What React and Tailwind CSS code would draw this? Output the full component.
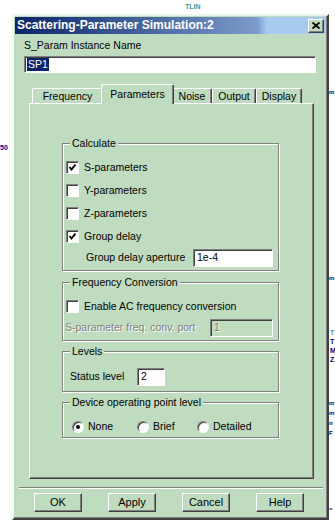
import React from 'react';

const raised = 'border border-t-white border-l-white border-r-[#404040] border-b-[#404040] shadow-[inset_-1px_-1px_0_#808080]';
const sunken = 'border border-t-[#808080] border-l-[#808080] border-r-white border-b-white shadow-[inset_1px_1px_0_#404040]';
const etched = 'border border-[#808080] shadow-[inset_1px_1px_0_#fff,1px_1px_0_#fff]';

function CheckBox({ checked }) {
  return (
    <div className={`w-[13px] h-[13px] bg-white flex items-center justify-center shrink-0 ${sunken}`}>
      {checked && (
        <svg width="9" height="9" viewBox="0 0 9 9">
          <polyline points="1.5,4 3.5,6.5 7.5,1.5" fill="none" stroke="#000" strokeWidth="2" />
        </svg>
      )}
    </div>
  );
}

function Radio({ checked }) {
  return (
    <div className="w-[12px] h-[12px] rounded-full bg-white border border-t-[#808080] border-l-[#808080] border-r-white border-b-white shadow-[inset_1px_1px_0_#404040] flex items-center justify-center shrink-0">
      {checked && <div className="w-[4px] h-[4px] rounded-full bg-black" />}
    </div>
  );
}

function Group({ title, className = '', children }) {
  return (
    <fieldset className={`ml-[32px] w-[217px] p-0 ${etched} ${className}`}>
      <legend className="ml-[7px] px-[2px] h-[13px] leading-[13px] bg-[#c0dcc0]">{title}</legend>
      {children}
    </fieldset>
  );
}

const tabs = [
  { name: 'Frequency', w: 'w-[71px]' },
  { name: 'Parameters', w: 'w-[73px]', active: true },
  { name: 'Noise', w: 'w-[40px]' },
  { name: 'Output', w: 'w-[44px]' },
  { name: 'Display', w: 'w-[46px]' },
];

export default function App() {
  return (
    <div className="relative w-[335px] h-[531px] bg-white overflow-hidden font-['Liberation_Sans',Arial,sans-serif] text-[10.5px] text-black">
      {/* schematic behind the dialog */}
      <span className="absolute left-[185px] top-[2px] text-[7px] font-bold text-[#3a9a9a]">TLIN</span>
      <span className="absolute left-[0px] top-[143px] text-[7px] font-bold text-[#000090]">50</span>
      <span className="absolute left-[329px] top-[88px] text-[6px] font-bold text-[#000090]">m</span>
      <span className="absolute left-[329px] top-[274px] text-[6px] font-bold text-[#000090]">m</span>
      <div className="absolute left-[330px] top-[328px] text-[7px] leading-[9px] font-bold">
        <div className="text-[#3a9a9a]">T</div>
        <div className="text-[#000090]">T</div>
        <div className="text-[#000090]">M</div>
        <div className="text-[#000090]">Z</div>
      </div>
      <div className="absolute left-[329px] top-[398px] text-[6px] leading-[10px] font-bold text-[#000090]">
        <div>m</div>
        <div>m</div>
        <div>n</div>
        <div>F</div>
      </div>
      <span className="absolute left-[329px] top-[505px] text-[6px] font-bold text-[#000090]">=</span>

      {/* dialog */}
      <div className="relative mt-[14px] ml-[12px] w-[317px] h-[506px] p-[1px] bg-[#c0dcc0] border-2 border-t-[#e8f4e8] border-l-[#f4faf4] border-r-[#404040] border-b-[#404040] shadow-[inset_-1px_-1px_0_#808080]">
        {/* title bar */}
        <div className="h-[17px] flex items-center justify-between bg-[linear-gradient(to_right,#0a246a_0%,#7d9ccb_78%,#a6caf0_81%,#a6caf0_100%)] pl-[2px] pr-[2px]">
          <span className="text-white font-bold text-[12px] leading-[17px]">Scattering-Parameter Simulation:2</span>
          <div className={`w-[16px] h-[14px] bg-[#c0dcc0] flex items-center justify-center ${raised}`}>
            <svg width="8" height="7" viewBox="0 0 8 7">
              <path d="M0.5 0.5 L7.5 6.5 M7.5 0.5 L0.5 6.5" stroke="#000" strokeWidth="1.8" />
            </svg>
          </div>
        </div>

        <div className="pl-[9px]">
          <div className="mt-[5px] h-[13px] leading-[13px]">S_Param Instance Name</div>
          <div className={`mt-[4px] w-[292px] h-[17px] bg-white flex items-center pl-[2px] ${sunken}`}>
            <span className="bg-[#0a246a] text-white px-[1px] leading-[13px]">SP1</span>
          </div>

          {/* tabs */}
          <div className="ml-[5px] mt-[11px]">
            <div className="h-[19px] flex items-end pl-[3px]">
              {tabs.map(t =>
                t.active ? (
                  <div
                    key={t.name}
                    className={`relative z-10 -mx-[2px] -mb-px h-[20px] ${t.w} bg-[#c0dcc0] border-t border-l border-t-white border-l-white border-r border-r-[#404040] shadow-[inset_-1px_0_0_#808080] rounded-t-[2px] flex justify-center pt-[3px] leading-[13px]`}
                  >
                    {t.name}
                  </div>
                ) : (
                  <div
                    key={t.name}
                    className={`h-[15px] ${t.w} border-t border-l border-t-white border-l-white border-r border-r-[#404040] shadow-[inset_-1px_0_0_#808080] rounded-t-[2px] flex justify-center pt-[1px] leading-[13px]`}
                  >
                    {t.name}
                  </div>
                )
              )}
            </div>

            <div className="w-[285px] h-[376px] border border-t-white border-l-white border-r-[#404040] border-b-[#404040] shadow-[inset_-1px_-1px_0_#808080] pt-[33px]">
              <Group title="Calculate">
                <div className="pt-[6px]">
                  {[
                    ['S-parameters', true],
                    ['Y-parameters', false],
                    ['Z-parameters', false],
                    ['Group delay', true],
                  ].map(([label, on]) => (
                    <div key={label} className="h-[23px] flex items-center pl-[3px] gap-[5px]">
                      <CheckBox checked={on} />
                      <span>{label}</span>
                    </div>
                  ))}
                  <div className="h-[20px] flex items-center pl-[23px] mb-[2px]">
                    <span className="w-[107px]">Group delay aperture</span>
                    <div className={`w-[80px] h-[18px] bg-white flex items-center pl-[3px] ${sunken}`}>1e-4</div>
                  </div>
                </div>
              </Group>

              <Group title="Frequency Conversion" className="mt-[5px]">
                <div className="pt-[6px]">
                  <div className="h-[23px] flex items-center pl-[3px] gap-[5px]">
                    <CheckBox checked={false} />
                    <span>Enable AC frequency conversion</span>
                  </div>
                  <div className="h-[20px] flex items-center pl-[2px] mb-[2px]">
                    <span className="w-[145px] text-[#808080] [text-shadow:1px_1px_0_#fff]">S-parameter freq. conv. port</span>
                    <div className={`w-[63px] h-[18px] bg-[#c0dcc0] flex items-center pl-[3px] text-[#808080] [text-shadow:1px_1px_0_#fff] ${sunken}`}>1</div>
                  </div>
                </div>
              </Group>

              <Group title="Levels" className="mt-[4px]">
                <div className="pt-[9px] pb-[4px]">
                  <div className="h-[20px] flex items-center pl-[7px]">
                    <span className="w-[67px]">Status level</span>
                    <div className={`w-[28px] h-[18px] bg-white flex items-center pl-[3px] ${sunken}`}>2</div>
                  </div>
                </div>
              </Group>

              <Group title="Device operating point level" className="mt-[4px]">
                <div className="pt-[8px]">
                  <div className="h-[20px] flex items-center pl-[9px]">
                    {[
                      ['None', true, 'w-[65px]'],
                      ['Brief', false, 'w-[60px]'],
                      ['Detailed', false, 'w-[70px]'],
                    ].map(([label, on, w]) => (
                      <div key={label} className={`${w} flex items-center gap-[4px]`}>
                        <Radio checked={on} />
                        <span>{label}</span>
                      </div>
                    ))}
                  </div>
                </div>
              </Group>
            </div>
          </div>

          {/* separator */}
          <div className="-ml-[5px] mt-[8px] w-[304px] border-t border-t-[#808080] border-b border-b-white" />

          {/* buttons */}
          <div className="mt-[4px] ml-[10px] flex gap-[26px]">
            {['OK', 'Apply', 'Cancel', 'Help'].map(b => (
              <div key={b} className={`w-[48px] h-[19px] flex items-center justify-center text-[11px] ${raised}`}>
                {b}
              </div>
            ))}
          </div>
        </div>
      </div>
    </div>
  );
}
